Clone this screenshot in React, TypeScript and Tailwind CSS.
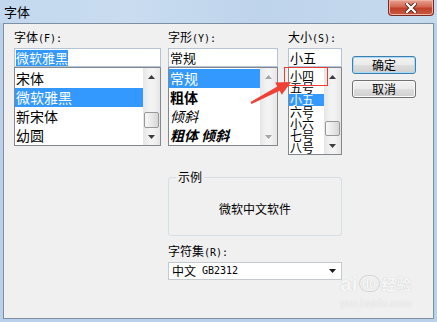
import React from 'react';

type Dir = 'up' | 'down';

function Tri({ dir, color }: { dir: Dir; color: string }) {
  return (
    <svg width="7" height="4" viewBox="0 0 7 4">
      <polygon points={dir === 'up' ? '3.5,0 7,4 0,4' : '0,0 7,0 3.5,4'} fill={color} />
    </svg>
  );
}

function ScrollBar({ disabled, thumb }: { disabled?: boolean; thumb?: string }) {
  const c = disabled ? '#a6a6a6' : '#3c3c3c';
  return (
    <div className="w-[17px] shrink-0 flex flex-col bg-[linear-gradient(90deg,#e6e6e6,#f3f3f3_40%,#f3f3f3_60%,#e6e6e6)]">
      <div className="h-[17px] flex items-center justify-center">
        <Tri dir="up" color={c} />
      </div>
      <div className="flex-1 flex flex-col justify-end items-center">
        {thumb && (
          <div
            className={`w-[15px] rounded-[2px] border border-[#979797] bg-[linear-gradient(90deg,#f8f8f8,#e9e9e9_50%,#d6d6d6)] ${thumb}`}
          />
        )}
      </div>
      <div className="h-[17px] flex items-center justify-center">
        <Tri dir="down" color={c} />
      </div>
    </div>
  );
}

const fonts = ['宋体', '微软雅黑', '新宋体', '幼圆'];
const styles = [
  { t: '常规', c: '' },
  { t: '粗体', c: 'font-bold' },
  { t: '倾斜', c: 'italic' },
  { t: '粗体 倾斜', c: 'font-bold italic' },
];
const sizes = ['小四', '五号', '小五', '六号', '小六', '七号', '八号'];

function Label({ text, keyChar }: { text: string; keyChar: string }) {
  return (
    <div className="text-[12px] leading-[14px] h-[14px] whitespace-nowrap">
      {text}
      <span className="font-['DejaVu_Sans_Mono',monospace] text-[10px]">({keyChar}):</span>
    </div>
  );
}

const btn =
  'h-[18px] w-[64px] rounded-[3px] flex items-center justify-center text-[12px] leading-none bg-[linear-gradient(#f2f2f2,#ebebeb_48%,#dddddd_52%,#cfcfcf)]';

export default function App() {
  return (
    <div className="relative w-[437px] h-[322px] overflow-hidden flex flex-col bg-[#b9d1ea] text-black font-['Noto_Sans_CJK_SC','Noto_Sans',sans-serif]">
      {/* title bar */}
      <div className="h-[23px] shrink-0 flex justify-between bg-[linear-gradient(90deg,#c3d8ee,#c9dcf0_30%,#bed4eb_60%,#c6daee)]">
        <div className="pl-[4px] pt-[4px] text-[13px] leading-[15px]">字体</div>
        <div className="mr-[3px] w-[46px] h-[16px] rounded-b-[4px] border border-t-0 border-[#7b2a20] bg-[linear-gradient(#e8a393,#d46750_45%,#c0402a_55%,#c85a40)] flex items-center justify-center shadow-[inset_0_0_0_1px_#eeb3a4]">
          <svg width="12" height="10" viewBox="0 0 12 10">
            <path d="M2 1 L10 9 M10 1 L2 9" stroke="#4a2a26" strokeWidth="4" strokeLinecap="square" />
            <path d="M2 1 L10 9 M10 1 L2 9" stroke="#ffffff" strokeWidth="2.2" strokeLinecap="square" />
          </svg>
        </div>
      </div>

      {/* client area */}
      <div className="flex-1 mx-[3px] mb-[3px] border border-[#7d8fa3] bg-[#f0f0f0] flex pl-[10px] pt-[6px]">
        <div className="flex flex-col">
          <div className="flex items-start">
            {/* font name */}
            <div className="w-[147px] flex flex-col">
              <Label text="字体" keyChar="F" />
              <div className="mt-[4px] h-[19px] border border-[#b5c3d6] bg-white px-[1px] flex items-center">
                <span className="bg-[#3399ff] text-white text-[13px] leading-[16px]">微软雅黑</span>
              </div>
              <div className="h-[79px] border border-[#828790] bg-white flex">
                <div className="flex-1 pt-[1px] overflow-hidden text-[14px]">
                  {fonts.map((f) => (
                    <div
                      key={f}
                      className={`h-[19px] leading-[19px] pl-[1px] ${f === '微软雅黑' ? 'bg-[#3399ff] text-white' : ''}`}
                    >
                      {f}
                    </div>
                  ))}
                </div>
                <ScrollBar thumb="h-[16px]" />
              </div>
            </div>

            {/* style */}
            <div className="ml-[7px] w-[110px] flex flex-col">
              <Label text="字形" keyChar="Y" />
              <div className="mt-[4px] h-[19px] border border-[#b5c3d6] bg-white px-[1px] flex items-center text-[13px] leading-[16px]">
                常规
              </div>
              <div className="h-[79px] border border-[#828790] bg-white flex">
                <div className="flex-1 pt-[1px] overflow-hidden text-[14px]">
                  {styles.map((s) => (
                    <div
                      key={s.t}
                      className={`h-[19px] leading-[19px] pl-[1px] whitespace-nowrap ${s.c} ${s.t === '常规' ? 'bg-[#3399ff] text-white' : ''}`}
                    >
                      {s.t}
                    </div>
                  ))}
                </div>
                <ScrollBar disabled />
              </div>
            </div>

            {/* size */}
            <div className="ml-[10px] w-[54px] flex flex-col">
              <Label text="大小" keyChar="S" />
              <div className="mt-[4px] h-[19px] border border-[#b5c3d6] bg-white px-[1px] flex items-center text-[13px] leading-[16px]">
                小五
              </div>
              <div className="h-[88px] border border-[#828790] bg-white flex">
                <div className="flex-1 pt-[2px] overflow-hidden text-[12px]">
                  {sizes.map((s) => (
                    <div
                      key={s}
                      className={`h-[12px] leading-[12px] pl-[1px] whitespace-nowrap ${s === '小五' ? 'bg-[#3399ff] text-white' : ''}`}
                    >
                      {s}
                    </div>
                  ))}
                </div>
                <ScrollBar thumb="h-[15px] mb-[1px]" />
              </div>
            </div>
          </div>

          {/* sample + charset */}
          <div className="ml-[154px] w-[174px] flex flex-col">
            <fieldset className="mt-[15px] h-[66px] border border-[#d5dfe5] rounded-[3px]">
              <legend className="ml-[7px] px-[2px] text-[12px] leading-[14px]">示例</legend>
              <div className="h-[50px] flex items-center justify-center text-[12px]">微软中文软件</div>
            </fieldset>
            <div className="mt-[8px]">
              <Label text="字符集" keyChar="R" />
            </div>
            <div className="mt-[4px] h-[18px] border border-[#c5c9d0] bg-white flex items-center justify-between pl-[3px] pr-[5px]">
              <div className="flex items-center text-[12px] leading-none">
                <span>中文</span>
                <span className="ml-[6px] font-['DejaVu_Sans_Mono',monospace] text-[10px]">GB2312</span>
              </div>
              <Tri dir="down" color="#1a1a1a" />
            </div>
          </div>
        </div>

        {/* buttons */}
        <div className="ml-[10px] pt-[26px] flex flex-col">
          <div className={`${btn} border border-[#3c7fb1] shadow-[inset_0_0_0_1px_#a8dcf6]`}>确定</div>
          <div className={`${btn} mt-[6px] border border-[#707070] shadow-[inset_0_0_0_1px_#fbfbfb]`}>取消</div>
        </div>
      </div>

      {/* red annotation */}
      <div className="absolute left-[284px] top-[67px] w-[44px] h-[19px] border-[1.5px] border-[#ee3b32] pointer-events-none" />
      <svg className="absolute left-0 top-0 pointer-events-none" width="437" height="322">
        <polygon
          points="250.5,102.1 277.3,86.4 275.2,82.4 291,82 281.8,94.8 279.7,90.8 251.5,103.9"
          fill="#ef4136"
        />
      </svg>

      {/* watermark */}
      <div className="absolute left-[340px] top-[273px] flex flex-col items-start opacity-45 pointer-events-none text-white [text-shadow:0_0_1px_#8c8c8c]">
        <div className="flex items-center">
          <span className="text-[21px] font-bold leading-none font-['Liberation_Sans',sans-serif]">ai</span>
          <span className="ml-[1px] w-[21px] h-[17px] rounded-full border border-[#b4b4b4] flex items-center justify-center text-[12px] font-bold leading-none font-['Liberation_Sans',sans-serif]">
            du
          </span>
          <span className="ml-[2px] text-[15px] font-bold leading-none">经验</span>
        </div>
        <div className="mt-[4px] text-[11px] leading-none font-['Liberation_Sans',sans-serif]">yan.baidu.com</div>
      </div>
    </div>
  );
}
